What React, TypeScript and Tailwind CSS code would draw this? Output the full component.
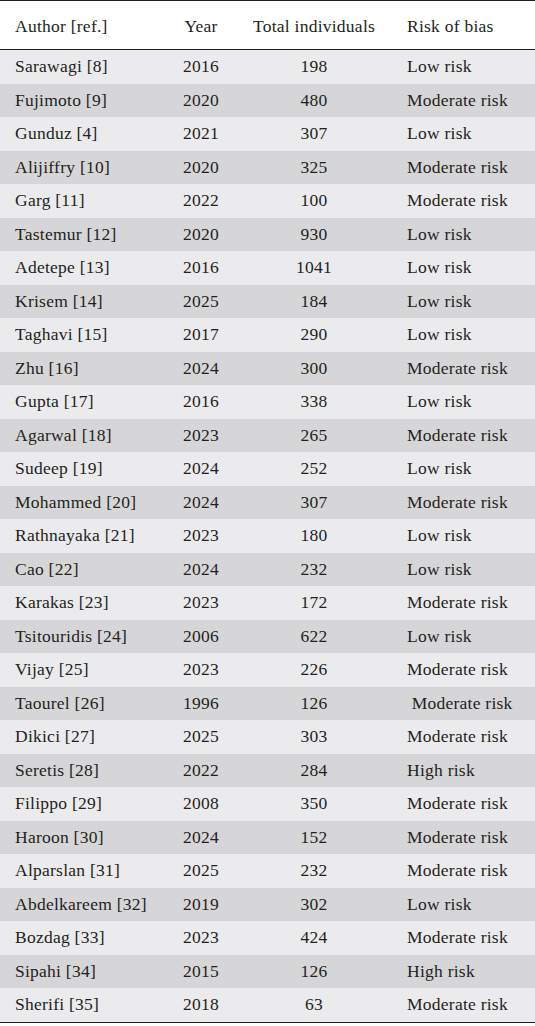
import React from "react";

const rows: [string, string, string, string][] = [
  ["Sarawagi [8]", "2016", "198", "Low risk"],
  ["Fujimoto [9]", "2020", "480", "Moderate risk"],
  ["Gunduz [4]", "2021", "307", "Low risk"],
  ["Alijiffry [10]", "2020", "325", "Moderate risk"],
  ["Garg [11]", "2022", "100", "Moderate risk"],
  ["Tastemur [12]", "2020", "930", "Low risk"],
  ["Adetepe [13]", "2016", "1041", "Low risk"],
  ["Krisem [14]", "2025", "184", "Low risk"],
  ["Taghavi [15]", "2017", "290", "Low risk"],
  ["Zhu [16]", "2024", "300", "Moderate risk"],
  ["Gupta [17]", "2016", "338", "Low risk"],
  ["Agarwal [18]", "2023", "265", "Moderate risk"],
  ["Sudeep [19]", "2024", "252", "Low risk"],
  ["Mohammed [20]", "2024", "307", "Moderate risk"],
  ["Rathnayaka [21]", "2023", "180", "Low risk"],
  ["Cao [22]", "2024", "232", "Low risk"],
  ["Karakas [23]", "2023", "172", "Moderate risk"],
  ["Tsitouridis [24]", "2006", "622", "Low risk"],
  ["Vijay [25]", "2023", "226", "Moderate risk"],
  ["Taourel [26]", "1996", "126", "\u00a0Moderate risk"],
  ["Dikici [27]", "2025", "303", "Moderate risk"],
  ["Seretis [28]", "2022", "284", "High risk"],
  ["Filippo [29]", "2008", "350", "Moderate risk"],
  ["Haroon [30]", "2024", "152", "Moderate risk"],
  ["Alparslan [31]", "2025", "232", "Moderate risk"],
  ["Abdelkareem [32]", "2019", "302", "Low risk"],
  ["Bozdag [33]", "2023", "424", "Moderate risk"],
  ["Sipahi [34]", "2015", "126", "High risk"],
  ["Sherifi [35]", "2018", "63", "Moderate risk"],
];

export default function App() {
  return (
    <div className="w-[535px] bg-white text-[#231f20] text-[17.5px] tracking-[0.25px] leading-none font-['Liberation_Serif','Times_New_Roman',serif]">
      <div className="border-t border-[#231f20]">
        <div className="flex items-center h-[49px] border-b-[1.5px] border-[#231f20]">
          <div className="w-[172px] pl-[15px] pt-[3px] whitespace-nowrap">Author [ref.]</div>
          <div className="w-[58px] text-center pt-[3px]">Year</div>
          <div className="w-[168px] text-center pt-[3px] whitespace-nowrap">Total individuals</div>
          <div className="flex-1 pl-[9px] pt-[3px] whitespace-nowrap">Risk of bias</div>
        </div>
        {rows.map((r, i) => (
          <div
            key={i}
            className={`flex items-center h-[33.5px] ${i % 2 === 0 ? "bg-[#ebebed]" : "bg-[#d6d6d8]"}`}
          >
            <div className="w-[172px] pl-[15px] whitespace-nowrap">{r[0]}</div>
            <div className="w-[58px] text-center">{r[1]}</div>
            <div className="w-[168px] text-center">{r[2]}</div>
            <div className="flex-1 pl-[9px] whitespace-pre">{r[3]}</div>
          </div>
        ))}
        <div className="border-t-[1.5px] border-[#231f20]" />
      </div>
    </div>
  );
}
